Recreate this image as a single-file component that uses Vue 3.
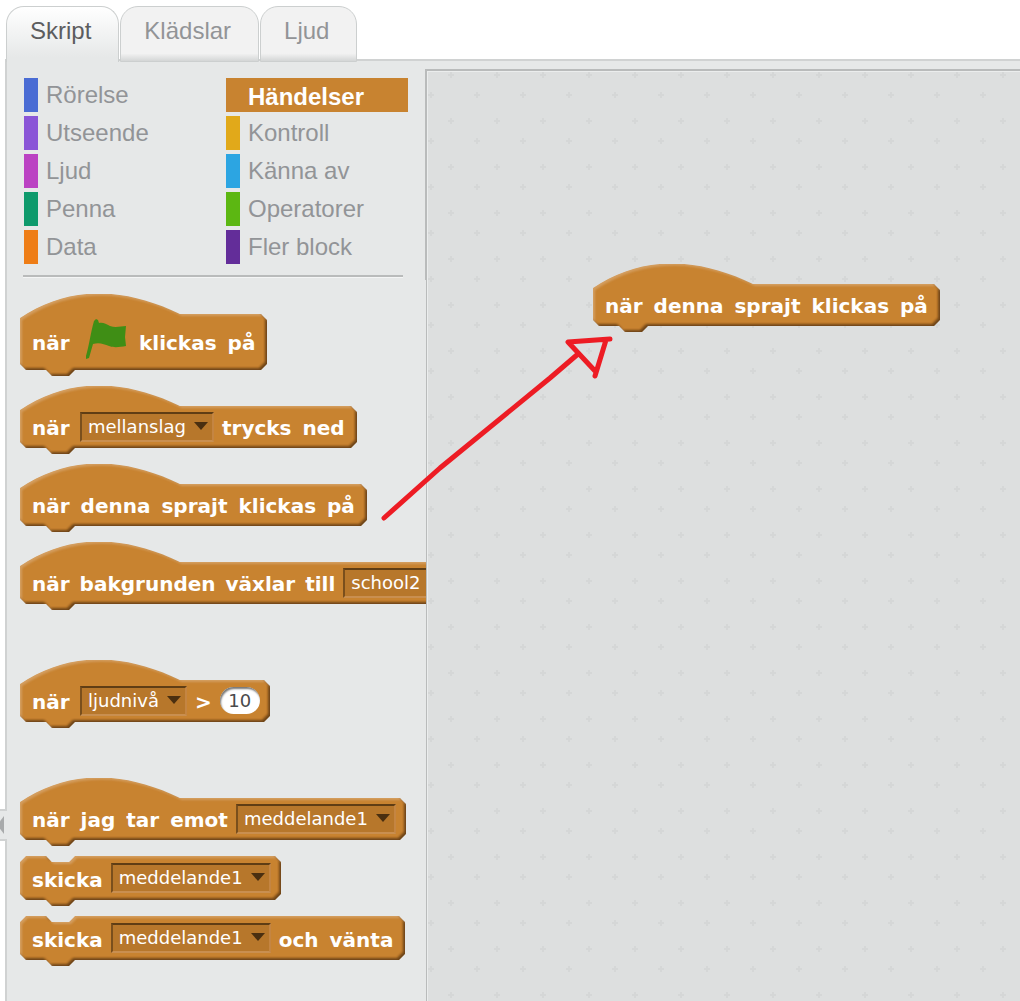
<script setup>
import { defineComponent, h, onBeforeUnmount, onMounted, ref } from 'vue'

// Outline of a block: w and ht are the body's outer size, without the bump below it.
function outline(w, ht, hat) {
  const top = hat
    ? `M0 24 C48 -8 102 -8 160 20 H${w - 6}`
    : `M0 6 L6 0 H26 L32 6 H49 L55 0 H${w - 6}`
  const side = hat ? 26 : 6
  return `${top} L${w} ${side} V${ht - 6} L${w - 6} ${ht} H55 L49 ${ht + 6} H32 L26 ${ht} H6 L0 ${ht - 6} Z`
}

let shapeCount = 0

// Draws the bevelled background to the size of the block that holds it.
const BlockShape = defineComponent({
  props: { hat: Boolean },
  setup(props) {
    const el = ref(null)
    const size = ref({ w: 200, ht: 44 })
    const id = `shape-${shapeCount++}`
    let observer
    const measure = () => {
      const box = el.value.parentElement
      size.value = { w: box.offsetWidth, ht: box.offsetHeight }
    }
    onMounted(() => {
      measure()
      observer = new ResizeObserver(measure)
      observer.observe(el.value.parentElement)
    })
    onBeforeUnmount(() => observer.disconnect())
    return () => {
      const { w, ht } = size.value
      const d = outline(w, ht, props.hat)
      const outside = `M-20 -20 H${w + 20} V${ht + 26} H-20 Z ${d}`
      const edge = (fill, transform, opacity) =>
        h('path', { d: outside, fill, transform, opacity, 'fill-rule': 'evenodd', filter: `url(#${id}-blur)` })
      return h('svg', { ref: el, width: w, height: ht + 6, 'aria-hidden': 'true' }, [
        h('defs', [
          h('clipPath', { id: `${id}-clip` }, [h('path', { d })]),
          h('filter', { id: `${id}-blur`, x: '-10%', y: '-20%', width: '120%', height: '140%' }, [
            h('feGaussianBlur', { stdDeviation: 1 })
          ])
        ]),
        h('g', { 'clip-path': `url(#${id}-clip)` }, [
          h('path', { d, fill: '#c88330' }),
          edge('#4a2c08', 'translate(-2 -2)', 0.7),
          edge('#dcb080', 'translate(2 2)', 0.6)
        ])
      ])
    }
  }
})

const tabs = [
  { name: 'Skript', active: true },
  { name: 'Klädslar' },
  { name: 'Ljud' }
]

const categories = [
  [
    { name: 'Rörelse', color: '#4a6cd4' },
    { name: 'Utseende', color: '#8a55d7' },
    { name: 'Ljud', color: '#bb42c3' },
    { name: 'Penna', color: '#0e9a6c' },
    { name: 'Data', color: '#ee7d16' }
  ],
  [
    { name: 'Händelser', color: '#c88330', active: true },
    { name: 'Kontroll', color: '#e1a91a' },
    { name: 'Känna av', color: '#2ca5e2' },
    { name: 'Operatorer', color: '#5cb712' },
    { name: 'Fler block', color: '#632d99' }
  ]
]

const text = (value) => ({ type: 'text', words: value.split(' ') })
const menu = (value, label) => ({ type: 'menu', value, label })

const groups = [
  [
    { hat: true, tall: true, parts: [text('när'), { type: 'flag' }, text('klickas på')] },
    { hat: true, parts: [text('när'), menu('mellanslag', 'Tangent'), text('trycks ned')] },
    { hat: true, parts: [text('när denna sprajt klickas på')] },
    { hat: true, tight: true, parts: [text('när bakgrunden växlar till'), menu('school2', 'Bakgrund')] }
  ],
  [
    { hat: true, parts: [text('när'), menu('ljudnivå', 'Sensor'), text('>'), { type: 'number', value: '10' }] }
  ],
  [
    { hat: true, parts: [text('när jag tar emot'), menu('meddelande1', 'Meddelande')] },
    { parts: [text('skicka'), menu('meddelande1', 'Meddelande')] },
    { parts: [text('skicka'), menu('meddelande1', 'Meddelande'), text('och vänta')] }
  ]
]

const placed = text('när denna sprajt klickas på')
</script>

<template>
  <div class="editor">
    <nav class="tabs">
      <button v-for="tab in tabs" :key="tab.name" type="button" class="tab" :class="{ active: tab.active }">
        {{ tab.name }}
      </button>
    </nav>

    <main class="panel">
      <section class="palette">
        <div class="categories">
          <div v-for="(column, i) in categories" :key="i" class="column">
            <button
              v-for="cat in column"
              :key="cat.name"
              type="button"
              class="category"
              :class="{ active: cat.active }"
              :style="{ '--color': cat.color }"
            >
              {{ cat.name }}
            </button>
          </div>
        </div>
        <hr class="divider">

        <div class="blocks">
          <div v-for="(group, g) in groups" :key="g" class="group">
            <div
              v-for="(block, b) in group"
              :key="b"
              class="block"
              :class="{ hat: block.hat, tall: block.tall, tight: block.tight }"
            >
              <BlockShape class="shape" :hat="block.hat" />
              <template v-for="(part, p) in block.parts" :key="p">
                <span v-if="part.type === 'text'" class="label">
                  <template v-for="(word, n) in part.words" :key="n"><span>{{ word }}</span>{{ ' ' }}</template>
                </span>
                <span v-else-if="part.type === 'menu'" class="menu">
                  <select :aria-label="part.label">
                    <option>{{ part.value }}</option>
                  </select>
                </span>
                <input
                  v-else-if="part.type === 'number'"
                  class="number"
                  type="text"
                  inputmode="numeric"
                  aria-label="Värde"
                  :value="part.value"
                >
                <svg v-else class="flag" width="51" height="40" viewBox="0 0 51 40" role="img" aria-label="grön flagga">
                  <path
                    fill="#3f8e15"
                    d="M16 0 L18 1 L19 4 C23 3 26 5 30 7 C36 9 41 7 46 7 L45 18 L46 27 C40 28 34 29 29 27 C24 25 19 23 13 25 L9 39 L6 40 L6 37 C9 27 11 12 14 2 Z"
                  />
                </svg>
              </template>
            </div>
          </div>
        </div>
      </section>

      <section class="workspace">
        <svg class="grid" width="100%" height="100%" aria-hidden="true">
          <defs>
            <pattern id="crosses" width="46" height="46" patternUnits="userSpaceOnUse">
              <path
                fill="#d5d7d7"
                d="M1 23h2v-2h2v2h2v2h-2v2h-2v-2h-2z M21 3h2v-2h2v2h2v2h-2v2h-2v-2h-2z"
              />
            </pattern>
          </defs>
          <rect width="100%" height="100%" fill="url(#crosses)" />
        </svg>
        <div class="block hat placed">
          <BlockShape class="shape" hat />
          <span class="label">
            <template v-for="(word, n) in placed.words" :key="n"><span>{{ word }}</span>{{ ' ' }}</template>
          </span>
        </div>
      </section>
    </main>

    <button type="button" class="handle" aria-label="Visa scenen">
      <svg width="4" height="18" viewBox="0 0 4 18"><path d="M4 0V18L-3 9Z" fill="#a8aaab" /></svg>
    </button>

    <svg class="arrow" width="240" height="190" viewBox="0 0 240 190" aria-hidden="true">
      <path
        d="M4 184 L60 134 L170 44 L198 20 M216 38 L188 8 L230 5 M226 6 L215 42"
        fill="none"
        stroke="#ed1c24"
        stroke-width="5"
        stroke-linecap="round"
        stroke-linejoin="round"
      />
    </svg>
  </div>
</template>

<style>
body {
  margin: 0;
  background: #fff;
}
</style>

<style scoped>
.editor {
  position: relative;
  display: flex;
  flex-direction: column;
  min-height: 100vh;
  overflow: hidden;
  font-family: "Liberation Sans", Arial, sans-serif;
  font-size: 24px;
}

button {
  margin: 0;
  border: 0;
  font: inherit;
  cursor: pointer;
}

.tabs {
  position: relative;
  z-index: 1;
  display: flex;
  gap: 1px;
  margin-bottom: -3px;
  padding: 6px 0 0 6px;
}

.tab {
  box-sizing: border-box;
  height: 56px;
  padding: 0 27px 6px 23px;
  border: 1px solid #cccfcf;
  border-radius: 18px 18px 0 0;
  background: linear-gradient(#f2f2f2 86%, #d4d6d6);
  color: #929497;
}

.tab.active {
  padding-bottom: 8px;
  border-bottom: 0;
  background: linear-gradient(#fff, #e6e8e8 92%);
  color: #5c5d5f;
}

.panel {
  flex: 1;
  display: flex;
  margin-left: 5px;
  border-top: 2px solid #d0d2d2;
  border-left: 2px solid #d0d2d2;
  background: #e6e8e8;
}

.palette {
  flex: none;
  display: flex;
  flex-direction: column;
  width: 418px;
}

.categories {
  display: flex;
  gap: 20px;
  padding: 17px 17px 0;
}

.column {
  flex: 1;
  display: flex;
  flex-direction: column;
  gap: 4px;
}

.category {
  height: 34px;
  padding: 0 0 0 8px;
  border-left: 14px solid var(--color);
  background: none;
  color: #929497;
  text-align: left;
}

.category.active {
  padding-top: 4px;
  background: var(--color);
  color: #fff;
  font-weight: bold;
}

.divider {
  align-self: stretch;
  height: 2px;
  margin: 11px 22px 0 16px;
  border: 0;
  border-bottom: 1px solid #f4f5f5;
  background: #b9bbbb;
}

.blocks {
  position: relative;
  z-index: 1;
  flex: 1;
  display: flex;
  flex-direction: column;
  gap: 56px;
  margin-top: 2px;
  margin-right: -1px;
  padding: 14px 0 32px 13px;
  overflow: hidden;
  background: #e6e8e8;
}

.group {
  display: flex;
  flex-direction: column;
  align-items: flex-start;
  gap: 16px;
}

.block {
  position: relative;
  display: flex;
  align-items: center;
  gap: 8px;
  box-sizing: border-box;
  height: 44px;
  padding: 0 10px 0 12px;
  color: #fff;
  font-family: "DejaVu Sans", Verdana, sans-serif;
  font-size: 20px;
  white-space: nowrap;
}

.block.hat {
  height: 62px;
  padding-top: 20px;
}

.block.tall {
  height: 76px;
}

.shape {
  position: absolute;
  top: 0;
  left: 0;
}

.label {
  position: relative;
  display: flex;
  gap: 11px;
  min-width: 40px;
  padding-top: 4px;
  font-weight: bold;
  line-height: 24px;
}

.hat .label {
  padding-top: 2px;
}

.tight .label {
  gap: 10px;
}

.label:not(:first-of-type) {
  min-width: 0;
}

.label:last-child {
  margin-right: 2px;
}

.flag {
  position: relative;
  margin-top: -6px;
}

.menu {
  position: relative;
  display: flex;
}

.menu::after {
  content: "";
  position: absolute;
  top: 10px;
  right: 6px;
  border: 7px solid transparent;
  border-top: 8px solid #4a2f10;
  border-bottom: 0;
  pointer-events: none;
}

select {
  box-sizing: border-box;
  height: 30px;
  margin: 0;
  padding: 0 26px 2px 6px;
  border: 2px solid;
  border-color: #5f3d14 #c48542 #c98f50 #7a4f1c;
  border-radius: 0;
  outline: 0;
  appearance: none;
  background: #b7772b;
  color: #fff;
  font: 18px "DejaVu Sans", Verdana, sans-serif;
}

.number {
  position: relative;
  box-sizing: border-box;
  width: 40px;
  height: 27px;
  margin-top: -2px;
  padding: 0;
  border: 0;
  border-radius: 14px;
  outline: 0;
  background: #fff;
  box-shadow: inset 1px 2px 2px #777;
  color: #4a4a4c;
  font: 18px "DejaVu Sans", Verdana, sans-serif;
  text-align: center;
}

.workspace {
  position: relative;
  flex: 1;
  min-width: 0;
  margin-top: 8px;
  border-top: 2px solid #b9bbbb;
  border-left: 2px solid #b9bbbb;
  background: #dddfdf;
  box-shadow: inset 1px 1px #ebeded;
}

.grid {
  position: absolute;
  inset: 0;
}

.placed {
  position: absolute;
  top: 193px;
  left: 166px;
}

.handle {
  position: absolute;
  top: 809px;
  left: 0;
  display: flex;
  align-items: center;
  width: 9px;
  height: 32px;
  padding: 0;
  border-top: 2px solid #d0d2d2;
  border-bottom: 2px solid #d0d2d2;
  background: #e6e8e8;
}

.arrow {
  position: absolute;
  z-index: 2;
  top: 334px;
  left: 380px;
  pointer-events: none;
}
</style>
